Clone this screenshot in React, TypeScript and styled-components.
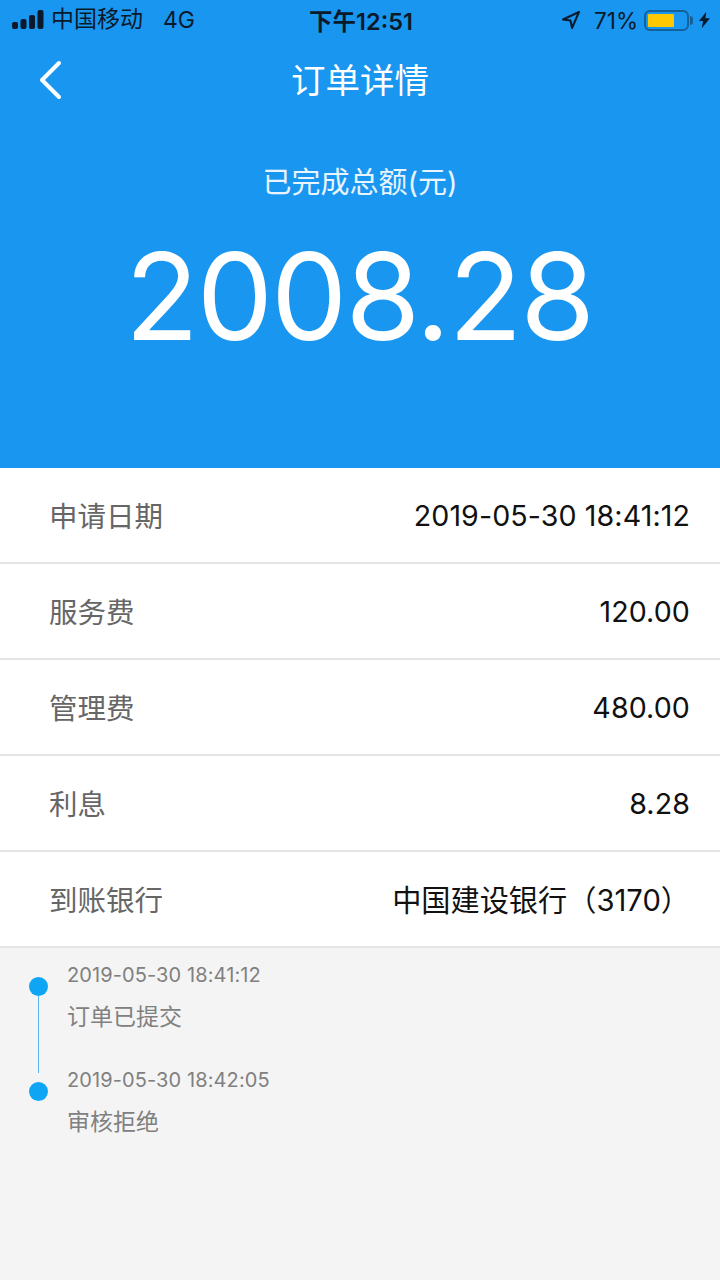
import styled, { createGlobalStyle } from 'styled-components';

const GlobalStyle = createGlobalStyle`
  html, body {
    margin: 0;
    padding: 0;
    background: #f4f4f4;
  }
  * {
    box-sizing: border-box;
  }
`;

const fontStack = `Inter, "Noto Sans CJK SC", sans-serif`;

const Page = styled.div`
  width: 720px;
  height: 1280px;
  display: flex;
  flex-direction: column;
  overflow: hidden;
  background: #f4f4f4;
  font-family: ${fontStack};
`;

const Header = styled.header`
  height: 468px;
  background: #1996f0;
  display: flex;
  flex-direction: column;
`;

const StatusBar = styled.div`
  height: 40px;
  padding: 0 10px 0 12px;
  display: grid;
  grid-template-columns: 1fr auto 1fr;
  align-items: center;
  color: #0a1a2a;
  font-size: 23px;
`;

const StatusLeft = styled.div`
  display: flex;
  align-items: center;
  gap: 7px;
`;

const Carrier = styled.span`
  margin-right: 13px;
  line-height: 38px;
  height: 40px;
`;

const StatusTime = styled.div`
  font-weight: 600;
  font-size: 23.5px;
`;

const StatusRight = styled.div`
  display: flex;
  align-items: center;
  justify-content: flex-end;
  gap: 5px;
  font-size: 22.5px;
`;

const LocationIcon = styled.svg`
  margin: 0 8px 0 2px;
`;

const Battery = styled.div`
  position: relative;
  width: 45px;
  height: 21px;
  border: 2px solid #14609a;
  border-radius: 6px;
  padding: 2px;
  margin: 0 5px 0 1px;
  &::after {
    content: '';
    position: absolute;
    right: -6px;
    top: 4px;
    width: 3px;
    height: 9px;
    background: #14609a;
    border-radius: 0 3px 3px 0;
  }
`;

const BatteryFill = styled.div`
  height: 100%;
  background: #ffc800;
  border-radius: 1px;
`;

const NavBar = styled.div`
  height: 80px;
  padding-bottom: 4px;
  position: relative;
  display: flex;
  align-items: center;
  justify-content: center;
  color: #fff;
  font-size: 34.5px;
`;

const BackIcon = styled.svg`
  position: absolute;
  left: 38px;
  top: 20px;
`;

const SumLabel = styled.div`
  margin-top: 41px;
  text-align: center;
  color: #e8f4fe;
  font-size: 29px;
  line-height: 44px;
`;

const Amount = styled.div`
  margin-top: 21px;
  padding-right: 2px;
  text-align: center;
  color: #fff;
  font-size: 121px;
  font-weight: 380;
  letter-spacing: -2px;
  line-height: 140px;
`;

const InfoList = styled.section`
  background: #fff;
`;

const InfoRow = styled.div`
  height: 96px;
  padding: 0 30px 1px 49px;
  display: flex;
  align-items: center;
  justify-content: space-between;
  border-bottom: 2px solid #e4e4e4;
`;

const InfoLabel = styled.span`
  color: #666;
  font-size: 28.5px;
`;

const InfoValue = styled.span<{ $cjk?: boolean }>`
  color: #111;
  font-size: ${(p) => (p.$cjk ? '29.2px' : '28.6px')};
  letter-spacing: ${(p) => (p.$cjk ? '0' : '0.1px')};
  padding-top: ${(p) => (p.$cjk ? '0' : '2px')};
  padding-bottom: ${(p) => (p.$cjk ? '2px' : '0')};
`;

const Timeline = styled.section`
  padding: 15px 0 0 29px;
  display: flex;
  flex-direction: column;
  gap: 38px;
`;

const Event = styled.div`
  position: relative;
  padding-left: 38px;
`;

const Dot = styled.span`
  position: absolute;
  left: 0;
  top: 14px;
  width: 19px;
  height: 19px;
  border-radius: 50%;
  background: #0ea5f5;
`;

const Connector = styled.span`
  position: absolute;
  left: 9px;
  top: 33px;
  width: 1px;
  height: 77px;
  background: #5ab4f0;
`;

const EventTime = styled.div`
  color: #808080;
  font-size: 20px;
  letter-spacing: 0.1px;
  line-height: 24px;
`;

const EventText = styled.div`
  margin-top: 17px;
  color: #808080;
  font-size: 23px;
  line-height: 26px;
`;

const rows = [
  { label: '申请日期', value: '2019-05-30 18:41:12' },
  { label: '服务费', value: '120.00' },
  { label: '管理费', value: '480.00' },
  { label: '利息', value: '8.28' },
  { label: '到账银行', value: '中国建设银行（3170）', cjk: true },
];

const events = [
  { time: '2019-05-30 18:41:12', text: '订单已提交' },
  { time: '2019-05-30 18:42:05', text: '审核拒绝' },
];

const App = () => (
  <Page>
    <GlobalStyle />
    <Header>
      <StatusBar>
        <StatusLeft>
          <svg width="32" height="20" viewBox="0 0 32 20" fill="#0a1a2a">
            <rect x="0" y="12" width="6" height="7" rx="2" />
            <rect x="8.5" y="9" width="6" height="10" rx="2" />
            <rect x="17" y="5" width="6" height="14" rx="2" />
            <rect x="25.5" y="0" width="6" height="19" rx="2" />
          </svg>
          <Carrier>中国移动</Carrier>
          <span>4G</span>
        </StatusLeft>
        <StatusTime>下午12:51</StatusTime>
        <StatusRight>
          <LocationIcon width="20" height="20" viewBox="0 0 20 20" fill="none" stroke="#0a1a2a" strokeWidth="2" strokeLinejoin="round">
            <path d="M18 2 2 9.5l7.5 1 1.500 7.500z" />
          </LocationIcon>
          <span>71%</span>
          <Battery>
            <BatteryFill style={{ width: '71%' }} />
          </Battery>
          <svg width="11" height="18" viewBox="0 0 12 18" fill="#0a1a2a">
            <path d="M8 0 0 10h4.500L3 18l9-11H7z" />
          </svg>
        </StatusRight>
      </StatusBar>
      <NavBar>
        <BackIcon width="26" height="40" viewBox="0 0 26 40" fill="none" stroke="#fff" strokeWidth="4" strokeLinecap="round" strokeLinejoin="round">
          <path d="M21 3 4 20l17 17" />
        </BackIcon>
        订单详情
      </NavBar>
      <SumLabel>已完成总额(元)</SumLabel>
      <Amount>2008.28</Amount>
    </Header>
    <InfoList>
      {rows.map((row) => (
        <InfoRow key={row.label}>
          <InfoLabel>{row.label}</InfoLabel>
          <InfoValue $cjk={row.cjk}>{row.value}</InfoValue>
        </InfoRow>
      ))}
    </InfoList>
    <Timeline>
      {events.map((event, i) => (
        <Event key={event.time}>
          <Dot />
          {i === 0 && <Connector />}
          <EventTime>{event.time}</EventTime>
          <EventText>{event.text}</EventText>
        </Event>
      ))}
    </Timeline>
  </Page>
);

export default App;
